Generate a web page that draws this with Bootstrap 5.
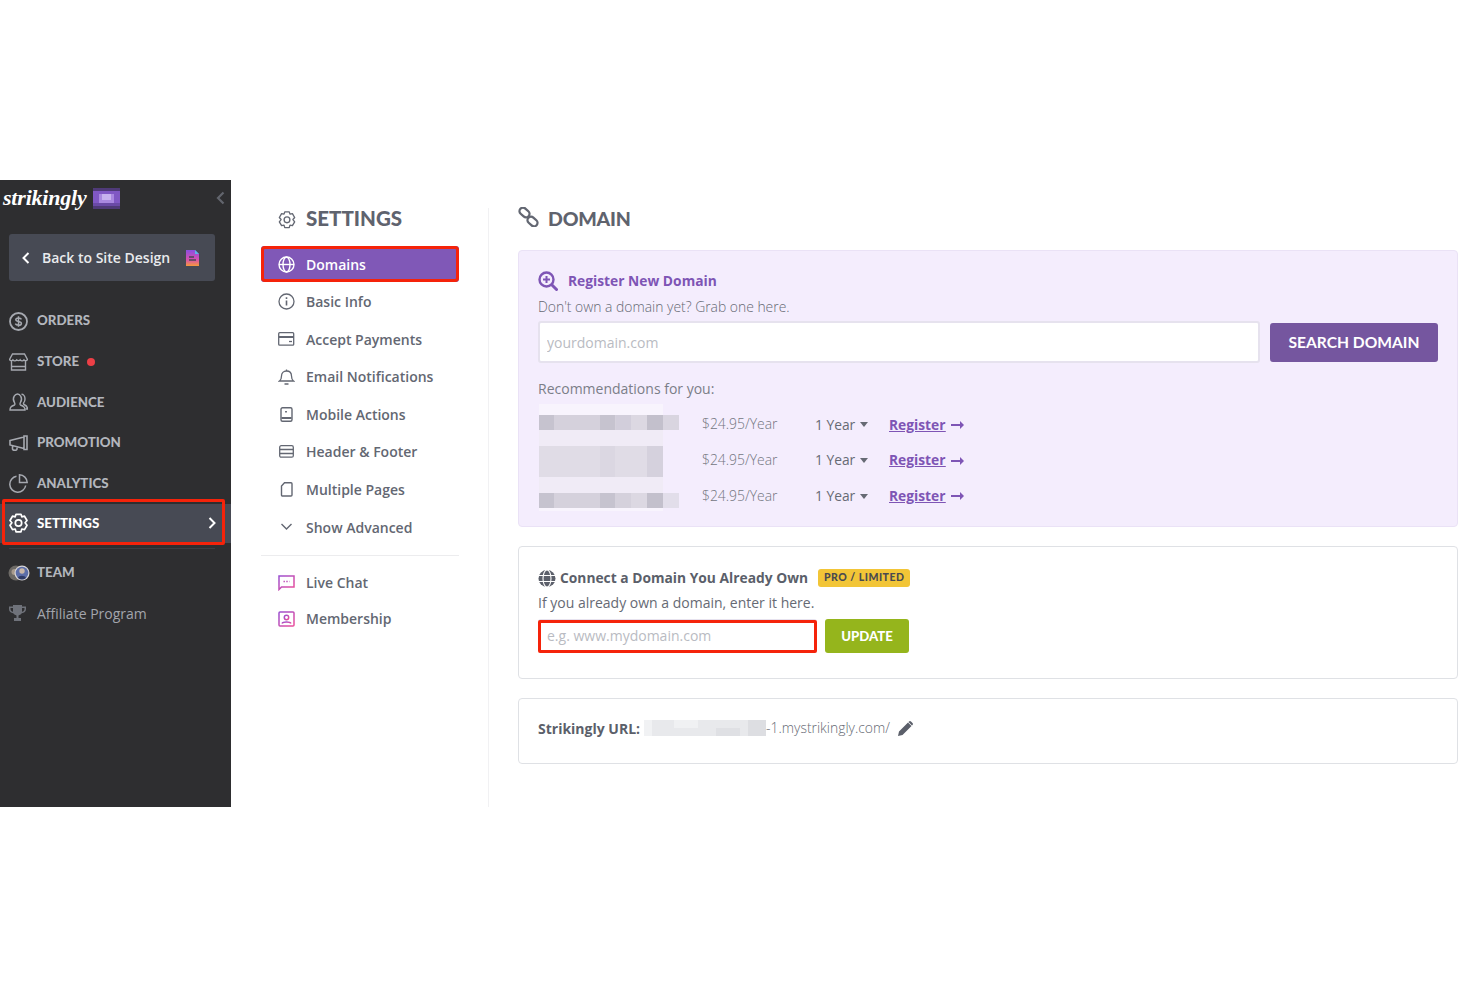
<!DOCTYPE html>
<html lang="en">
<head>
  <meta charset="UTF-8">
  <title>Strikingly - Domain settings</title>
  <link href="https://cdn.jsdelivr.net/npm/bootstrap@5.3.3/dist/css/bootstrap.min.css" rel="stylesheet">
  <style>
    body { background: #fff; font-family: "Open Sans", "Liberation Sans", sans-serif; color: #636772; font-size: 14px; }
    svg { display: block; flex: none; }
    .app-frame { margin-top: 180px; height: 627px; position: relative; }

    .side-dark { width: 231px; background: #2e2e30; flex: none; }
    .logo-row { height: 54px; padding: 0 6px 18px 3px; }
    .logo-word { font-family: "Liberation Serif", serif; font-style: italic; font-weight: 700; font-size: 22px; color: #fff; letter-spacing: -.2px; line-height: 1; }
    .logo-mark { margin-left: 6px; }
    .back-btn { margin: 0 16px 0 9px; height: 47px; background: #474a54; border-radius: 3px; color: #e9eaed; font-weight: 600; padding: 0 15px 0 13px; }
    .back-text { margin-left: 12px; }
    .dark-list { margin-top: 20px; }
    .dark-item { height: 40.6px; padding-left: 9px; gap: 9px; color: #b3b6bd; font-family: Lato, sans-serif; font-weight: 900; font-size: 13.3px; }
    .dark-item.is-on { height: 39px; margin: 0 0 1px; background: #474a54; color: #fff; padding-right: 15px; }
    .dark-sep { height: 1px; background: #3d3e42; margin: 5px 16px 4px 9px; }
    .dot-red { width: 8px; height: 8px; background: #ec3f46; border-radius: 50%; margin-left: -1px; }
    .dark-plain { font-family: "Open Sans", sans-serif; font-weight: 400; font-size: 14px; color: #a2a5ac; height: 39px; }
    .team-item { padding-left: 8px; }
    .team-label { margin-left: -2px; }
    .affiliate-label { margin-left: 2px; }

    .side-light { width: 258px; flex: none; border-right: 1px solid #f1f1f3; margin-top: 28px; padding: 0 29px 0 30px; }
    .head-title { font-family: Lato, sans-serif; font-weight: 900; font-size: 20.5px; color: #5f636e; line-height: 22px; }
    .head-domain { font-size: 19.5px; letter-spacing: -.2px; }
    .side-head { height: 38px; padding-left: 17px; gap: 10px; margin-top: -1px; margin-bottom: 1px; }
    .sub-item { height: 37.6px; padding-left: 17px; gap: 11px; font-weight: 600; font-size: 14px; color: #636772; }
    .sub-item.is-on { height: 36px; margin-bottom: .8px; background: #8058b7; color: #fff; border-radius: 3px; }
    .sub-sep { height: 1px; background: #ececee; margin: 9px 0; }
    .sub-item.tight { height: 36px; }

    .main-pane { padding: 28px 22px 0 29px; min-width: 0; }
    .main-head { height: 42px; gap: 9px; }
    .main-head svg { margin-top: -1px; }
    .pane-box { border: 1px solid #dfe1e5; border-radius: 4px; padding: 19px 19px 0; margin-bottom: 19px; background: #fff; }
    .pane-purple { height: 277px; background: #f4edfd; border-color: #eae2f6; }
    .pane-connect { height: 133px; }
    .pane-url { height: 66px; padding-top: 18px; }
    .box-head { height: 22px; gap: 10px; }
    .box-title { font-weight: 700; font-size: 13.8px; color: #7e55b5; }
    .box-title-grey { color: #5b5f6a; }
    .box-text { line-height: 20px; height: 20px; color: #7b7e88; font-size: 14px; }
    .text-thin { font-weight: 300; color: #666a74; font-size: 13.9px; margin-top: 5px; }
    .text-own { color: #666a74; margin-top: 3px; }
    .rec-title { margin: 16px 0 8px; }
    .dom-input { height: 42px; font-size: 14px; border: 2px solid #e6e2ee; border-radius: 3px; padding: 0 7px; color: #333; }
    .dom-input::placeholder { color: #b9bbc2; }
    .search-input { width: 0; }
    .search-row { gap: 10px; margin-top: 4px; }
    .btn-search { background: #75569f; color: #fff; font-family: Lato, sans-serif; font-weight: 700; font-size: 15.6px; width: 168px; height: 39px; border: 0; border-radius: 3px; padding: 1px 0 0; flex: none; }
    .blur-names { margin: -3px 23px 0 0; }
    .rec-row { height: 35.7px; color: #7b7e88; }
    .rec-price { width: 113px; color: #73767f; font-weight: 300; font-size: 13.9px; }
    .rec-year { width: 74px; gap: 5px; color: #666a74; font-size: 13.8px; }
    .caret-down { width: 0; height: 0; border: 4.5px solid transparent; border-top: 5px solid #666a74; border-bottom: 0; }
    .rec-link { color: #7e55b5; font-weight: 700; text-decoration: underline; gap: 5px; font-size: 13.8px; }
    .connect-head { height: 24px; }
    .tag-pro { background: #f2c537; color: #4a4a4f; font-family: Lato, sans-serif; font-weight: 900; font-size: 10.5px; letter-spacing: .5px; border-radius: 3px; height: 18px; padding: 0 6px; margin-left: 10px; }
    .connect-row { gap: 8px; margin-top: 6px; }
    .connect-input { width: 279px; height: 33px; flex: none; }
    .btn-update { background: #95b51c; color: #fff; font-family: Lato, sans-serif; font-weight: 900; font-size: 13.2px; width: 84px; height: 34px; border: 0; border-radius: 3px; padding: 1px 0 0; flex: none; }
    .url-line { height: 22px; }
    .url-label { color: #5b5f6a; }
    .url-rest { color: #666a74; margin-left: -4px; font-weight: 300; font-size: 13.9px; padding-top: 1px; }

    .red-mark { position: absolute; border: 3px solid #f5230a; border-radius: 2px; pointer-events: none; }
    .mark-settings { left: 2px; top: 319px; width: 223px; height: 46px; }
    .mark-domains { left: 261px; top: 66px; width: 198px; height: 36px; border-radius: 4px; }
    .mark-input { left: 538px; top: 440px; width: 279px; height: 33px; }
  </style>
</head>
<body>
  <svg width="0" height="0" class="position-absolute">
    <defs>
      <linearGradient id="gradPink" x1="0" y1="0" x2="1" y2="1"><stop offset="0" stop-color="#9a4fd0"/><stop offset="1" stop-color="#ec4f9b"/></linearGradient>
      <linearGradient id="gradDoc" x1="0" y1="0" x2="0" y2="1"><stop offset="0" stop-color="#8a4fe0"/><stop offset=".6" stop-color="#d84fb0"/><stop offset="1" stop-color="#f59a3a"/></linearGradient>
    </defs>
  </svg>

  <div class="app-frame d-flex">
    <aside class="side-dark">
      <div class="logo-row d-flex align-items-center">
        <span class="logo-word">strikingly</span>
        <svg class="logo-mark" width="27" height="23" viewBox="0 0 9 7" shape-rendering="crispEdges">
          <rect width="9" height="7" fill="#4f3a78"/><rect y="1" width="9" height="5" fill="#8058c4"/><rect x="2" y="2" width="5" height="3" fill="#a988e0"/><rect x="3" y="2" width="3" height="2" fill="#c7b2ee"/><rect y="5" width="9" height="1" fill="#6a4aa6"/>
        </svg>
        <svg class="ms-auto" width="9" height="14" viewBox="0 0 9 14" fill="none" stroke="#62656d" stroke-width="2.2"><path d="M7.5 1.5 2 7l5.5 5.5"/></svg>
      </div>
      <div class="back-btn d-flex align-items-center">
        <svg width="8" height="12" viewBox="0 0 8 12" fill="none" stroke="#fff" stroke-width="2"><path d="M6.5 1 1.5 6l5 5"/></svg>
        <span class="back-text flex-grow-1 text-nowrap">Back to Site Design</span>
        <svg width="15" height="16" viewBox="0 0 15 16"><path fill="url(#gradDoc)" d="M1 0h9l4 4v12H1z"/><path fill="#5bb6e8" d="M10 0l4 4h-4z"/><path stroke="#474a54" stroke-width="1.3" d="M4 7h5M4 10h7"/></svg>
      </div>
      <nav class="dark-list">
        <div class="dark-item d-flex align-items-center">
          <svg width="19" height="19" viewBox="0 0 19 19" fill="none" stroke="#a6a9b0" stroke-width="1.8"><circle cx="9.5" cy="9.5" r="8.5"/><path stroke-width="1.5" d="M12.5 7.3c-.5-.9-1.6-1.4-3-1.4-1.5 0-2.700.7-2.700 1.800 0 2.500 5.600 1.100 5.600 3.700 0 1.100-1.300 1.800-2.900 1.800-1.500 0-2.700-.5-3.200-1.500M9.500 4.300v10.400"/></svg>
          <span>ORDERS</span>
        </div>
        <div class="dark-item d-flex align-items-center">
          <svg width="19" height="18" viewBox="0 0 19 18" fill="none" stroke="#a6a9b0" stroke-width="1.4"><path d="M3.5 1h12l3 5.500c-.7 1.400-2.600 1.600-3.500.4-.9 1.300-2.900 1.300-3.800 0-.6 1-2.800 1-3.500 0-.9 1.300-2.900 1.300-3.800 0C3 8.100 1.200 7.900.5 6.500z"/><path d="M2.500 8v9h14V8M2.500 13.500h14"/></svg>
          <span>STORE</span><span class="dot-red"></span>
        </div>
        <div class="dark-item d-flex align-items-center">
          <svg width="19" height="18" viewBox="0 0 19 18" fill="none" stroke="#a6a9b0" stroke-width="1.4"><path d="M1 17c0-3 1-3.600 4.500-5 .5-.3.5-1.500 0-2.300C4.300 8 4.200 5 5.200 3.200 6 1.800 7.200 1 8.500 1c1.300 0 2.500.8 3.200 2.200 1 1.800.9 4.800-.3 6.500-.5.8-.5 2 0 2.300 3.500 1.400 4.600 2 4.600 5z"/><path d="M12.500 1.300c1.700 0 3.500 1.700 3.500 4.700 0 1.500-.5 3-1.300 3.800-.3.5-.2 1.300.2 1.600 2 .9 3.600 1.500 3.600 4.600h-2"/></svg>
          <span>AUDIENCE</span>
        </div>
        <div class="dark-item d-flex align-items-center">
          <svg width="19" height="17" viewBox="0 0 19 17" fill="none" stroke="#a6a9b0" stroke-width="1.6"><path d="M1 5.500 15 2v11.500L1 10zM15 1v13.500h3V1zM3.500 10.600V14c0 1.500 4.500 2 4.500 0v-2.300"/></svg>
          <span>PROMOTION</span>
        </div>
        <div class="dark-item d-flex align-items-center">
          <svg width="19" height="19" viewBox="0 0 19 19" fill="none" stroke="#a6a9b0" stroke-width="1.5"><path d="M7.500 2.300a8 8 0 1 0 9.200 9.200"/><path d="M10.500.8a8 8 0 0 1 7.700 7.700h-7.700z"/></svg>
          <span>ANALYTICS</span>
        </div>
        <div class="dark-item is-on d-flex align-items-center">
          <svg width="19" height="20" viewBox="0 0 19 20" fill="none" stroke="#fff" stroke-width="1.7"><path stroke-linejoin="round" d="M7 1.300h5l.8 2.500 2.700-.6 2.500 4.300-1.900 2.300 1.900 2.500-2.500 4.300-2.700-.6-.8 2.800H7l-.8-2.800-2.700.6L1 12.300l1.900-2.500L1 7.500l2.500-4.300 2.700.6z"/><circle cx="9.500" cy="10" r="3.200"/></svg>
          <span class="flex-grow-1">SETTINGS</span>
          <svg width="8" height="12" viewBox="0 0 8 12" fill="none" stroke="#fff" stroke-width="2"><path d="M1.500 1l5 5-5 5"/></svg>
        </div>
        <div class="dark-sep"></div>
        <div class="dark-item team-item d-flex align-items-center">
          <svg width="22" height="16" viewBox="0 0 22 16"><circle cx="8" cy="8" r="7.500" fill="#6d6a66"/><circle cx="6.500" cy="7" r="3" fill="#a89b8d"/><circle cx="14" cy="8" r="7.500" fill="#d9d6d6"/><circle cx="14" cy="8" r="6.300" fill="#5c6ea8"/><circle cx="14" cy="6" r="2.700" fill="#c9b7a8"/><path fill="#2f3b66" d="M10 13c.5-3 7-3 8 0a6 6 0 0 1-8 0z"/></svg>
          <span class="team-label">TEAM</span>
        </div>
        <div class="dark-item dark-plain d-flex align-items-center">
          <svg width="17" height="16" viewBox="0 0 17 16"><path fill="#6f727a" d="M4 0h9v1.500h4V4c0 2.500-1.800 4-4.200 4.300C12 9.500 10.500 10.200 9.500 10.400V13H12v3H5v-3h2.500v-2.600C6.500 10.200 5 9.500 4.200 8.300 1.800 8 0 6.500 0 4V1.500h4zM1.500 3v1c0 1.500 1 2.500 2.500 2.800V3zM13 3v3.800c1.500-.3 2.500-1.300 2.500-2.800V3z"/></svg>
          <span class="affiliate-label">Affiliate Program</span>
        </div>
      </nav>
    </aside>

    <aside class="side-light">
      <div class="side-head d-flex align-items-start">
        <svg class="mt-1" width="18" height="18" viewBox="0 0 19 20" fill="none" stroke="#636772" stroke-width="1.5"><path stroke-linejoin="round" d="M7 1h5l.8 2.500 2.700-.6 2.500 4.300-1.900 2.300L18 12l-2.500 4.300-2.700-.6L12 18.500H7l-.8-2.800-2.700.6L1 12l1.900-2.500L1 7.200l2.500-4.300 2.700.6z"/><circle cx="9.500" cy="9.800" r="3.200"/></svg>
        <span class="head-title">SETTINGS</span>
      </div>
      <div class="sub-item is-on d-flex align-items-center">
        <svg width="17" height="17" viewBox="0 0 17 17" fill="none" stroke="#fff" stroke-width="1.4"><circle cx="8.500" cy="8.500" r="7.500"/><ellipse cx="8.500" cy="8.500" rx="3.500" ry="7.500"/><path d="M1 8.500h15"/></svg>
        <span>Domains</span>
      </div>
      <div class="sub-item d-flex align-items-center">
        <svg width="17" height="17" viewBox="0 0 17 17" fill="none" stroke="#636772" stroke-width="1.3"><circle cx="8.500" cy="8.500" r="7.500"/><path stroke-width="1.6" d="M8.500 7.500v5M8.500 4.300v1.600"/></svg>
        <span>Basic Info</span>
      </div>
      <div class="sub-item d-flex align-items-center">
        <svg width="17" height="14" viewBox="0 0 17 14" fill="none" stroke="#636772" stroke-width="1.3"><rect x=".7" y=".7" width="15" height="12.500" rx="1"/><path stroke-width="2" d="M1 5h15"/><path d="M11 9.500h3"/></svg>
        <span>Accept Payments</span>
      </div>
      <div class="sub-item d-flex align-items-center">
        <svg width="17" height="16" viewBox="0 0 17 16" fill="none" stroke="#636772" stroke-width="1.3"><path d="M1.500 12c1.500-1 2-2.500 2-5 0-3 2-5 5-5s5 2 5 5c0 2.500.5 4 2 5z"/><path d="M8.500 .6v1.400M6.500 15h4"/></svg>
        <span>Email Notifications</span>
      </div>
      <div class="sub-item d-flex align-items-center">
        <svg width="17" height="15" viewBox="0 0 17 15" fill="none" stroke="#636772" stroke-width="1.4"><rect x="3" y=".7" width="11" height="13.500" rx="1.500"/><path stroke-width="1.8" d="M3.500 11h10M8 4v1.500"/></svg>
        <span>Mobile Actions</span>
      </div>
      <div class="sub-item d-flex align-items-center">
        <svg width="17" height="13" viewBox="0 0 17 13" fill="none" stroke="#636772" stroke-width="1.3"><rect x="1.700" y=".7" width="13.600" height="11.500" rx="1.500"/><path d="M2 4.500h13M2 8.500h13"/></svg>
        <span>Header &amp; Footer</span>
      </div>
      <div class="sub-item d-flex align-items-center">
        <svg width="17" height="15" viewBox="0 0 17 15" fill="none" stroke="#636772" stroke-width="1.4"><path d="M6.500.7H13a1 1 0 0 1 1 1V13a1 1 0 0 1-1 1H4.500a1 1 0 0 1-1-1V4z"/></svg>
        <span>Multiple Pages</span>
      </div>
      <div class="sub-item d-flex align-items-center">
        <svg width="17" height="10" viewBox="0 0 17 10" fill="none" stroke="#636772" stroke-width="1.4"><path d="M3.500 2 8.500 7l5-5"/></svg>
        <span>Show Advanced</span>
      </div>
      <div class="sub-sep"></div>
      <div class="sub-item tight d-flex align-items-center">
        <svg width="17" height="16" viewBox="0 0 17 16" fill="none" stroke="url(#gradPink)" stroke-width="1.5"><path d="M1 1h15v11H3.500L1 14.500z"/><path stroke="#bc4fb8" stroke-width="1.4" stroke-dasharray="1.400 1.400" d="M5.500 6.500h6"/></svg>
        <span>Live Chat</span>
      </div>
      <div class="sub-item tight d-flex align-items-center">
        <svg width="17" height="16" viewBox="0 0 17 16" fill="none" stroke="url(#gradPink)" stroke-width="1.5"><rect x="1" y="1" width="15" height="14" rx="1"/><circle cx="8.500" cy="6.500" r="2.200"/><path d="M4 12.500c1-2 8-2 9 0"/></svg>
        <span>Membership</span>
      </div>
    </aside>

    <main class="main-pane flex-grow-1">
      <div class="main-head d-flex align-items-start">
        <svg width="21" height="20" viewBox="0 0 21 20" fill="none" stroke="#636772" stroke-width="2.3"><rect x="1" y="2" width="11" height="7" rx="3.500" transform="rotate(42 6.500 5.500)"/><rect x="9" y="11" width="11" height="7" rx="3.500" transform="rotate(42 14.500 14.500)"/></svg>
        <span class="head-title head-domain">DOMAIN</span>
      </div>

      <section class="pane-box pane-purple">
        <div class="box-head d-flex align-items-center">
          <svg width="20" height="20" viewBox="0 0 20 20" fill="none" stroke="#7e55b5" stroke-width="2.4"><circle cx="8.500" cy="8.500" r="7"/><path stroke-width="3" stroke-linecap="round" d="m14 14 4.500 4.500"/><path stroke-width="2" d="M8.500 5v7M5 8.500h7"/></svg>
          <span class="box-title">Register New Domain</span>
        </div>
        <div class="box-text text-thin">Don't own a domain yet? Grab one here.</div>
        <div class="search-row d-flex align-items-center">
          <input class="form-control dom-input search-input flex-grow-1" type="text" placeholder="yourdomain.com">
          <button class="btn btn-search" type="button">SEARCH DOMAIN</button>
        </div>
        <div class="box-text rec-title">Recommendations for you:</div>
        <div class="d-flex">
          <svg class="blur-names" width="141" height="107" viewBox="0 0 141 107" shape-rendering="crispEdges">
            <rect width="141" height="107" fill="#f4edfd"/>
            <rect x="1" y="0" width="124" height="11" fill="#f8f4fd"/>
            <rect x="1" y="11" width="140" height="15" fill="#d5d1dc"/><rect x="1" y="11" width="15" height="15" fill="#c6c3cf"/><rect x="62" y="11" width="15" height="15" fill="#c6c3cf"/><rect x="78" y="11" width="15" height="15" fill="#d2cedb"/><rect x="93" y="11" width="16" height="15" fill="#dcd8e2"/><rect x="109" y="11" width="16" height="15" fill="#c3c0cc"/><rect x="125" y="11" width="16" height="15" fill="#d9d5e0"/>
            <rect x="1" y="26" width="124" height="16" fill="#f0ebf6"/>
            <rect x="1" y="42" width="124" height="31" fill="#e0dce6"/><rect x="109" y="42" width="16" height="31" fill="#d5d1dd"/><rect x="62" y="42" width="15" height="31" fill="#dbd7e2"/>
            <rect x="1" y="73" width="124" height="16" fill="#f0ebf6"/>
            <rect x="1" y="89" width="140" height="15" fill="#d5d1dc"/><rect x="1" y="89" width="15" height="15" fill="#c6c3cf"/><rect x="62" y="89" width="15" height="15" fill="#c6c3cf"/><rect x="93" y="89" width="16" height="15" fill="#dcd8e2"/><rect x="109" y="89" width="16" height="15" fill="#c3c0cc"/><rect x="125" y="89" width="16" height="15" fill="#e2deea"/>
            <rect x="1" y="104" width="124" height="3" fill="#f8f4fd"/>
          </svg>
          <div class="flex-grow-1">
            <div class="rec-row d-flex align-items-center">
              <span class="rec-price">$24.95/Year</span>
              <span class="rec-year d-flex align-items-center">1 Year <i class="caret-down"></i></span>
              <a href="#" class="rec-link d-flex align-items-center"><u>Register</u><svg width="13" height="8" viewBox="0 0 13 8"><path fill="#7e55b5" d="M0 3h9V0l4 4-4 4V5H0z"/></svg></a>
            </div>
            <div class="rec-row d-flex align-items-center">
              <span class="rec-price">$24.95/Year</span>
              <span class="rec-year d-flex align-items-center">1 Year <i class="caret-down"></i></span>
              <a href="#" class="rec-link d-flex align-items-center"><u>Register</u><svg width="13" height="8" viewBox="0 0 13 8"><path fill="#7e55b5" d="M0 3h9V0l4 4-4 4V5H0z"/></svg></a>
            </div>
            <div class="rec-row d-flex align-items-center">
              <span class="rec-price">$24.95/Year</span>
              <span class="rec-year d-flex align-items-center">1 Year <i class="caret-down"></i></span>
              <a href="#" class="rec-link d-flex align-items-center"><u>Register</u><svg width="13" height="8" viewBox="0 0 13 8"><path fill="#7e55b5" d="M0 3h9V0l4 4-4 4V5H0z"/></svg></a>
            </div>
          </div>
        </div>
      </section>

      <section class="pane-box pane-connect">
        <div class="connect-head d-flex align-items-center">
          <svg class="me-1" width="18" height="17" viewBox="0 0 18 17"><circle cx="9" cy="8.500" r="8.500" fill="#5b5f6a"/><path fill="none" stroke="#fff" stroke-width="1.1" d="M0 5.500h18M0 11.500h18"/><ellipse cx="9" cy="8.500" rx="4" ry="8.500" fill="none" stroke="#fff" stroke-width="1.1"/></svg>
          <span class="box-title box-title-grey">Connect a Domain You Already Own</span>
          <span class="tag-pro d-inline-flex align-items-center">PRO / LIMITED</span>
        </div>
        <div class="box-text text-own">If you already own a domain, enter it here.</div>
        <div class="connect-row d-flex align-items-start">
          <input class="form-control dom-input connect-input" type="text" placeholder="e.g. www.mydomain.com">
          <button class="btn btn-update" type="button">UPDATE</button>
        </div>
      </section>

      <section class="pane-box pane-url d-flex align-items-start">
        <div class="url-line d-flex align-items-center">
          <span class="fw-bold url-label">Strikingly URL:</span>
          <svg class="mx-1" width="122" height="16" viewBox="0 0 122 16" shape-rendering="crispEdges">
            <rect width="122" height="16" fill="#e8e9ec"/><rect x="0" width="8" height="16" fill="#f1f2f4"/><rect x="30" width="24" height="8" fill="#f0f1f3"/><rect x="72" y="8" width="24" height="8" fill="#dfe0e4"/><rect x="104" width="18" height="16" fill="#dddee2"/>
          </svg>
          <span class="url-rest">-1.mystrikingly.com/</span>
          <svg class="ms-2" width="15" height="15" viewBox="0 0 15 15"><path fill="#5b5f6a" d="M0 15l1-4.500L10 1.500l3.500 3.500-9 9zM11 .5a1.500 1.500 0 0 1 2 0L14.500 2a1.500 1.500 0 0 1 0 2l-.5.5L10.500 1z"/></svg>
        </div>
      </section>
    </main>

    <div class="red-mark mark-settings"></div>
    <div class="red-mark mark-domains"></div>
    <div class="red-mark mark-input"></div>
  </div>

  <script src="https://cdn.jsdelivr.net/npm/bootstrap@5.3.3/dist/js/bootstrap.bundle.min.js"></script>
</body>
</html>
